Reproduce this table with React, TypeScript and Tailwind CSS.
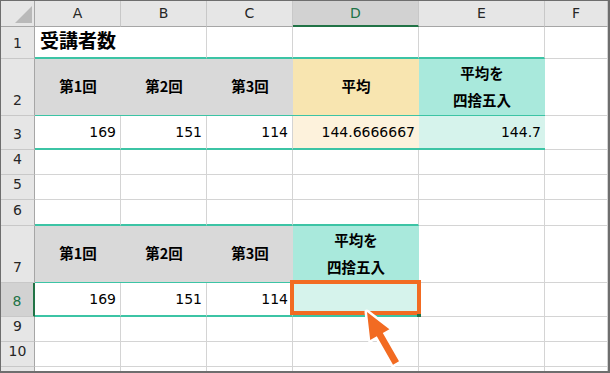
import React from "react";

const colHead =
  "flex items-center justify-center bg-[#e6e6e6] border-r border-b border-r-[#c8c8c8] border-b-[#a6a6a6] text-[#262626]";
const rowHead =
  "flex items-end justify-center pb-[7px] bg-[#e6e6e6] border-r border-b border-r-[#a6a6a6] border-b-[#c8c8c8] text-[#262626] leading-[16px]";
const plain = "bg-white border-r border-b border-[#d4d4d4]";
const num =
  "flex items-center justify-end pr-[4px] border-r border-b border-[#d4d4d4] bg-white text-black";
const label =
  "flex items-center justify-center pb-[3px] font-['Noto_Sans_CJK_JP',sans-serif] font-bold text-[14.5px] text-black";
const label2 =
  "flex flex-col items-center justify-center pb-[2px] font-['Noto_Sans_CJK_JP',sans-serif] font-bold text-[14.5px] leading-[27px] text-black";

function Corner() {
  return (
    <div className="flex items-end justify-end pr-[2px] pb-[3px] bg-[#e6e6e6] border-r border-b border-r-[#a6a6a6] border-b-[#a6a6a6]">
      <svg width="17" height="17" viewBox="0 0 17 17">
        <polygon points="17,0 17,17 0,17" fill="#b9b9b9" />
      </svg>
    </div>
  );
}

function Arrow() {
  return (
    <svg
      className="absolute left-[355px] top-[300px]"
      width="56"
      height="72"
      viewBox="0 0 56 72"
    >
      <polygon
        points="11,11 33.4,28.2 26.8,31.9 43,60.3 37,63.7 20.8,35.3 14.2,39"
        fill="#f26b22"
        stroke="#ffffff"
        strokeWidth="5"
        strokeLinejoin="round"
        paintOrder="stroke"
      />
    </svg>
  );
}

export default function App() {
  return (
    <div className="relative w-[610px] h-[373px] bg-white border-t border-l border-r-2 border-b-2 border-[#6e6e6e] font-['DejaVu_Sans',sans-serif] text-[14px] overflow-hidden">
      <div className="grid grid-cols-[34px_86px_86px_86px_126px_126px_63px] grid-rows-[26px_32px_57px_34px_25px_25px_26px_57px_34px_25px_25px_4px]">
        {/* column headers */}
        <Corner />
        <div className={colHead}>A</div>
        <div className={colHead}>B</div>
        <div className={colHead}>C</div>
        <div className="flex items-center justify-center bg-[#d2d2d2] border-r border-b-2 border-r-[#c8c8c8] border-b-[#217346] text-[#217346]">
          D
        </div>
        <div className={colHead}>E</div>
        <div className={colHead}>F</div>

        {/* row 1 */}
        <div className={rowHead}>1</div>
        <div className="flex items-center pl-[5px] pb-[4px] bg-white border-b-2 border-b-[#3cc4a5] font-['Noto_Sans_CJK_JP',sans-serif] font-bold text-[19px] text-black whitespace-nowrap">
          受講者数
        </div>
        <div className="bg-white border-r border-b-2 border-r-[#d4d4d4] border-b-[#3cc4a5]" />
        <div className="bg-white border-r border-b-2 border-r-[#d4d4d4] border-b-[#3cc4a5]" />
        <div className="bg-white border-r border-b-2 border-r-[#d4d4d4] border-b-[#3cc4a5]" />
        <div className="bg-white border-r border-b-2 border-r-[#d4d4d4] border-b-[#3cc4a5]" />
        <div className={plain} />

        {/* row 2 */}
        <div className={rowHead}>2</div>
        <div className={`${label} bg-[#d9d9d9] border-b border-b-[#3cc4a5]`}>第1回</div>
        <div className={`${label} bg-[#d9d9d9] border-b border-b-[#3cc4a5]`}>第2回</div>
        <div className={`${label} bg-[#d9d9d9] border-b border-b-[#3cc4a5]`}>第3回</div>
        <div className={`${label} bg-[#f8e5b0] border-b border-b-[#3cc4a5]`}>平均</div>
        <div className={`${label2} bg-[#a9e9dc] border-b border-b-[#3cc4a5]`}>
          <span>平均を</span>
          <span>四捨五入</span>
        </div>
        <div className={plain} />

        {/* row 3 */}
        <div className={rowHead}>3</div>
        <div className={`${num} border-b-2 border-b-[#3cc4a5]`}>169</div>
        <div className={`${num} border-b-2 border-b-[#3cc4a5]`}>151</div>
        <div className={`${num} border-b-2 border-b-[#3cc4a5]`}>114</div>
        <div className="flex items-center justify-end pr-[4px] bg-[#fdf2dc] border-b-2 border-b-[#3cc4a5] text-black">
          144.6666667
        </div>
        <div className="flex items-center justify-end pr-[4px] bg-[#d6f3ec] border-b-2 border-b-[#3cc4a5] text-black">
          144.7
        </div>
        <div className={plain} />

        {/* rows 4 - 5 */}
        <div className={rowHead}>4</div>
        <div className={plain} />
        <div className={plain} />
        <div className={plain} />
        <div className={plain} />
        <div className={plain} />
        <div className={plain} />

        <div className={rowHead}>5</div>
        <div className={plain} />
        <div className={plain} />
        <div className={plain} />
        <div className={plain} />
        <div className={plain} />
        <div className={plain} />

        {/* row 6 */}
        <div className={rowHead}>6</div>
        <div className="bg-white border-r border-b-2 border-r-[#d4d4d4] border-b-[#3cc4a5]" />
        <div className="bg-white border-r border-b-2 border-r-[#d4d4d4] border-b-[#3cc4a5]" />
        <div className="bg-white border-r border-b-2 border-r-[#d4d4d4] border-b-[#3cc4a5]" />
        <div className="bg-white border-r border-b-2 border-r-[#d4d4d4] border-b-[#3cc4a5]" />
        <div className={plain} />
        <div className={plain} />

        {/* row 7 */}
        <div className={rowHead}>7</div>
        <div className={`${label} bg-[#d9d9d9] border-b border-b-[#3cc4a5]`}>第1回</div>
        <div className={`${label} bg-[#d9d9d9] border-b border-b-[#3cc4a5]`}>第2回</div>
        <div className={`${label} bg-[#d9d9d9] border-b border-b-[#3cc4a5]`}>第3回</div>
        <div className={`${label2} bg-[#a9e9dc] border-b border-b-[#3cc4a5]`}>
          <span>平均を</span>
          <span>四捨五入</span>
        </div>
        <div className={plain} />
        <div className={plain} />

        {/* row 8 */}
        <div className="flex items-end justify-center pb-[7px] bg-[#d2d2d2] border-r-2 border-b border-r-[#217346] border-b-[#c8c8c8] text-[#217346] leading-[16px]">
          8
        </div>
        <div className={`${num} border-b-2 border-b-[#3cc4a5]`}>169</div>
        <div className={`${num} border-b-2 border-b-[#3cc4a5]`}>151</div>
        <div className={`${num} border-b-2 border-b-[#3cc4a5]`}>114</div>
        <div className="relative bg-[#d6f3ec] border-b-2 border-b-[#3cc4a5]">
          <div className="absolute -left-[3px] -top-[3px] -right-[2px] bottom-0 border-[4px] border-[#f26b22]" />
          <div className="absolute -right-[2px] -bottom-[2px] w-[4px] h-[3px] bg-[#217346]" />
        </div>
        <div className={plain} />
        <div className={plain} />

        {/* rows 9 - 10 */}
        <div className={rowHead}>9</div>
        <div className={plain} />
        <div className={plain} />
        <div className={plain} />
        <div className={plain} />
        <div className={plain} />
        <div className={plain} />

        <div className={rowHead}>10</div>
        <div className={plain} />
        <div className={plain} />
        <div className={plain} />
        <div className={plain} />
        <div className={plain} />
        <div className={plain} />

        {/* partially visible row 11 */}
        <div className="bg-[#e6e6e6] border-r border-r-[#a6a6a6]" />
        <div className="bg-white border-r border-[#d4d4d4]" />
        <div className="bg-white border-r border-[#d4d4d4]" />
        <div className="bg-white border-r border-[#d4d4d4]" />
        <div className="bg-white border-r border-[#d4d4d4]" />
        <div className="bg-white border-r border-[#d4d4d4]" />
        <div className="bg-white border-r border-[#d4d4d4]" />
      </div>
      <Arrow />
    </div>
  );
}
